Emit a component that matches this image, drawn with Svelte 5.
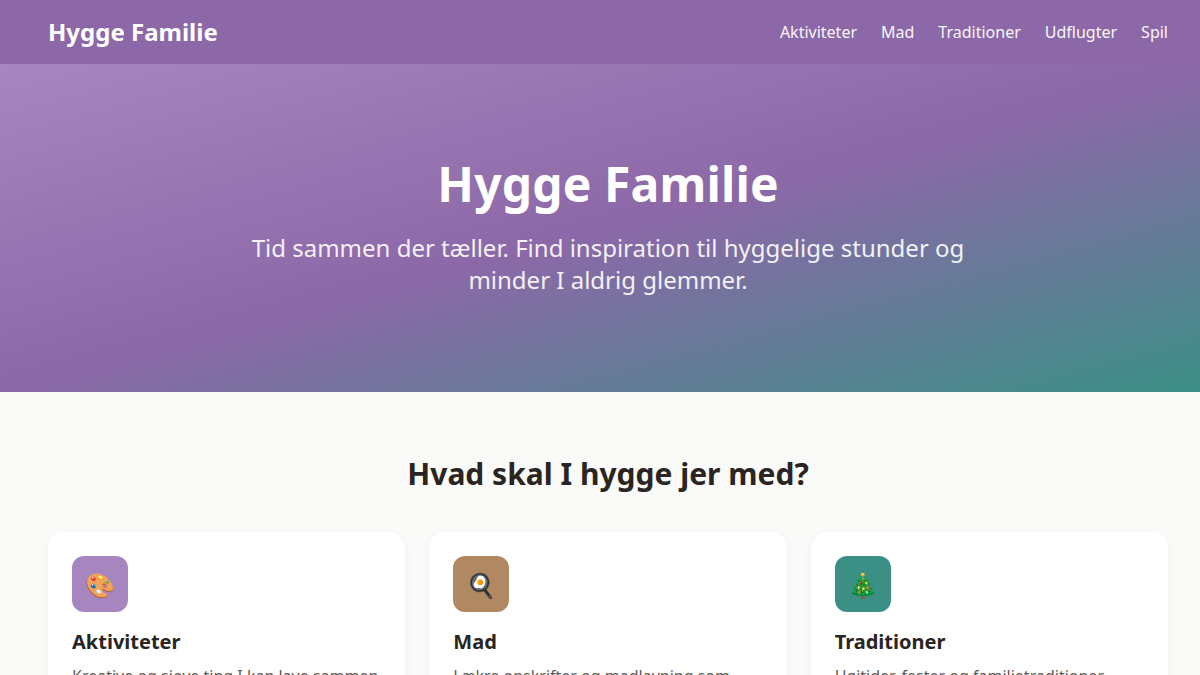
<script>
  const links = ['Aktiviteter', 'Mad', 'Traditioner', 'Udflugter', 'Spil'];

  const cards = [
    { icon: '🎨', title: 'Aktiviteter', text: 'Kreative og sjove ting I kan lave sammen', color: '#a786bf' },
    { icon: '🍳', title: 'Mad', text: 'Lækre opskrifter og madlavning som', color: '#b08862' },
    { icon: '🎄', title: 'Traditioner', text: 'Højtider, fester og familietraditioner', color: '#3b8f84' }
  ];
</script>

<nav class="topbar">
  <span class="logo">Hygge Familie</span>
  <ul class="links">
    {#each links as link}
      <li>{link}</li>
    {/each}
  </ul>
</nav>

<header class="hero">
  <h1>Hygge Familie</h1>
  <p>Tid sammen der tæller. Find inspiration til hyggelige stunder og minder I aldrig glemmer.</p>
</header>

<main class="content">
  <h2>Hvad skal I hygge jer med?</h2>
  <div class="grid">
    {#each cards as card}
      <article class="card">
        <div class="icon" style="background: {card.color}">{card.icon}</div>
        <h3>{card.title}</h3>
        <p>{card.text}</p>
      </article>
    {/each}
  </div>
</main>

<style>
  :global(body) {
    background: #fafaf8;
    color: #2a2522;
    font-family: "Noto Sans", sans-serif;
    overflow: hidden;
  }

  .topbar {
    height: 64px;
    box-sizing: border-box;
    padding: 0 32px 0 48px;
    display: flex;
    align-items: center;
    justify-content: space-between;
    background: #8c68a8;
    color: #fff;
  }

  .logo {
    font-size: 24px;
    line-height: 32px;
    font-weight: 700;
  }

  .links {
    display: flex;
    gap: 24px;
    margin: 0;
    padding: 0;
    list-style: none;
    font-size: 16px;
    opacity: 0.95;
  }

  .hero {
    height: 328px;
    box-sizing: border-box;
    padding: 88px 32px 0 48px;
    text-align: center;
    color: #fff;
    background: linear-gradient(165deg, #a786bf 0%, #8c68a8 50%, #3b8f86 100%);
  }

  .hero h1 {
    margin: 0 0 16px;
    font-size: 48px;
    line-height: 64px;
    font-weight: 700;
    letter-spacing: 0.15px;
  }

  .hero p {
    max-width: 768px;
    margin: 0 auto;
    font-size: 24px;
    line-height: 32px;
    opacity: 0.9;
  }

  .content {
    padding: 64px 32px 64px 48px;
  }

  .content h2 {
    margin: 0 0 40px;
    text-align: center;
    font-size: 30px;
    line-height: 36px;
    font-weight: 700;
  }

  .grid {
    display: grid;
    grid-template-columns: repeat(3, 1fr);
    gap: 24px;
  }

  .card {
    padding: 24px;
    background: #fff;
    border-radius: 16px;
    box-shadow: 0 4px 12px rgba(0, 0, 0, 0.04);
  }

  .icon {
    width: 56px;
    height: 56px;
    margin-bottom: 16px;
    border-radius: 12px;
    display: flex;
    align-items: center;
    justify-content: center;
    font-size: 24px;
  }

  .card h3 {
    margin: 0 0 8px;
    font-size: 20px;
    line-height: 28px;
    font-weight: 700;
  }

  .card p {
    margin: 0;
    font-size: 16px;
    line-height: 24px;
    color: #5f5a56;
  }
</style>
